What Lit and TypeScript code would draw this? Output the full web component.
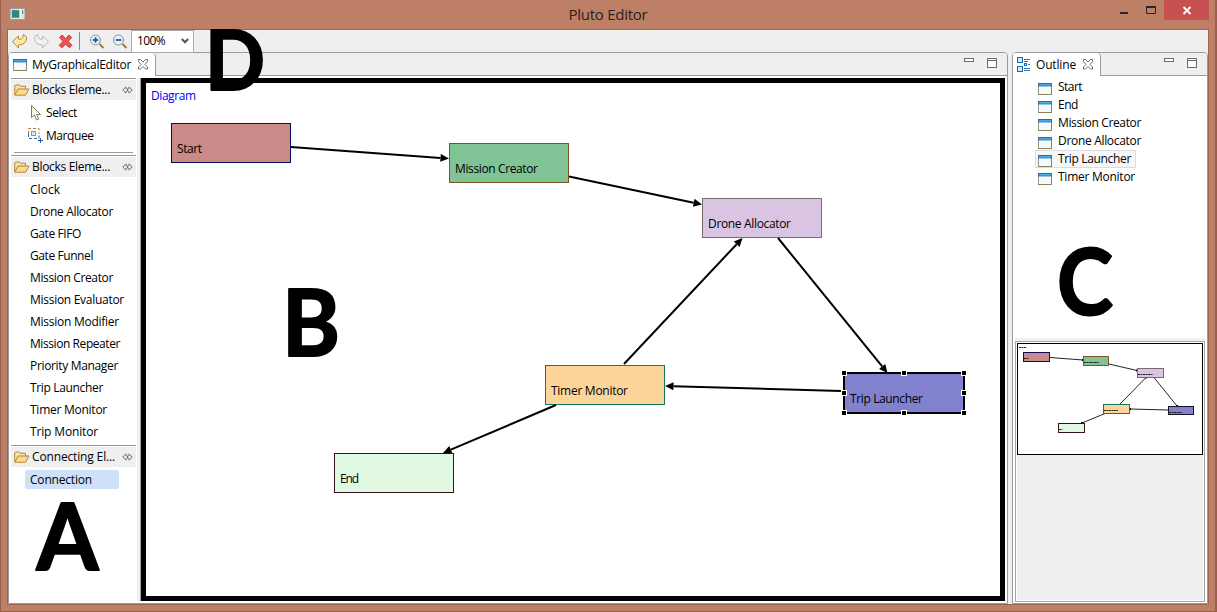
import { LitElement, html, css, svg } from "lit";
import { customElement } from "lit/decorators.js";

const FONT = '"Open Sans", "Noto Sans", sans-serif';
const ctx = document.createElement("canvas").getContext("2d")!;

/** Label tracked so that it takes up the given width. */
const fit = (text: string, width: number, size = 12) => {
  ctx.font = `${size}px ${FONT}`;
  const gap = (width - ctx.measureText(text).width) / text.length;
  return html`<span class="label" style="letter-spacing:${gap.toFixed(3)}px">${text}</span>`;
};

const viewIcon = html`<svg class="icon" width="14" height="12" viewBox="0 0 14 12">
  <rect x=".5" y=".5" width="13" height="11" fill="#f2fafe" stroke="#8d8259" />
  <path d="M.5 11V3" stroke="#8f9a97" />
  <rect width="14" height="3.4" fill="#2b6cab" /><rect x="1" y="1" width="12" height="1.6" fill="#46aee6" />
</svg>`;
const closeIcon = html`<svg class="icon" width="12" height="11" viewBox="0 0 12 11">
  <path d="M1.5.5h2L6 3l2.5-2.5h2v2L8 5.500l2.500 2.500v2h-2L6 7.500 3.500 10h-2V8L4 5.500 1.500 2.500z" fill="#fff" stroke="#6e6e6e" />
</svg>`;
const viewButtons = html`<svg class="viewbtns" width="34" height="12" viewBox="0 0 34 12">
  <rect x=".5" y="1.500" width="9" height="3" fill="#fff" stroke="#6b6b6b" />
  <rect x="23.500" y="1.500" width="9" height="9" fill="#fff" stroke="#6b6b6b" /><path d="M23 3.500h10" stroke="#6b6b6b" />
</svg>`;
const folderIcon = html`<svg class="icon" width="16" height="12" viewBox="0 0 16 12">
  <path d="M.7 10.500V2l1-1h3.600l1 1.200h5.200V5" fill="#fbe3ab" stroke="#b9823c" />
  <path d="M.8 11.200 4 5h11L11.500 11.200z" fill="#fbd98f" stroke="#b9823c" />
</svg>`;
const pinIcon = html`<svg class="icon" width="11" height="8" viewBox="0 0 11 8">
  <path d="M4 .8.8 4 4 7.200M7 .8 10.200 4 7 7.200M6.500 2.200 4.800 4l1.700 1.800M4.500 2.200 6.200 4 4.500 5.800M4 1v1.500M7 1v1.500M4 7V5.500M7 7V5.500" fill="none" stroke="#6a6a6a" />
</svg>`;

const NODES = [
  { t: "Start", w: 25, x: 171, y: 123, f: "#ca8a87", s: "#0c0c5c", m: [1023, 352, 27, 10] },
  { t: "Mission Creator", w: 83, x: 449, y: 143, f: "#80c395", s: "#7d5428", m: [1083, 356, 26, 10] },
  { t: "Drone Allocator", w: 83, x: 702, y: 198, f: "#d9c5e3", s: "#7c6b63", m: [1137, 368, 27, 10] },
  { t: "Timer Monitor", w: 77, x: 545, y: 365, f: "#fdd59b", s: "#137a5c", m: [1103, 404, 27, 10] },
  { t: "Trip Launcher", w: 73, x: 844, y: 373, f: "#8281ce", s: "#111122", m: [1168, 406, 26, 9] },
  { t: "End", w: 19, x: 334, y: 453, f: "#e1f9e3", s: "#351014", m: [1058, 423, 27, 10] },
];
const LINKS = [
  [291, 147, 449, 158.5], [569, 176.500, 702, 204.500], [624, 364, 742.500, 238],
  [778, 238, 887.500, 373], [841, 391, 665, 386], [556, 405, 443, 453],
];
const MINI_LINKS = [
  [1050, 357.500, 1083, 360], [1109, 364, 1137, 370.500], [1120, 404, 1146, 377.500],
  [1154, 377.500, 1177, 406], [1168, 410, 1130, 409], [1105, 413.500, 1082, 423],
];

const arrow = ([x1, y1, x2, y2]: number[]) => {
  const l = Math.hypot(x2 - x1, y2 - y1), u = (x2 - x1) / l, v = (y2 - y1) / l;
  const bx = x2 - u * 8.500, by = y2 - v * 8.500;
  return svg`<path d="M${x1} ${y1}L${bx} ${by}" stroke="#000" stroke-width="2"/>
    <path d="M${x2} ${y2}L${bx - v * 4} ${by + u * 4}L${bx + v * 4} ${by - u * 4}z"/>`;
};

@customElement("app-root")
export class AppRoot extends LitElement {
  static styles = css`
    * { box-sizing: border-box; }
    :host { display: block; position: relative; width: 1217px; height: 612px; overflow: hidden; font: 12px/18px "Open Sans", "Noto Sans", sans-serif; color: #000; }
    svg { display: block; flex: none; }
    .label { white-space: nowrap; flex: none; }
    .window { display: flex; flex-direction: column; height: 612px; background: #bd7f66; border: solid #96604e; border-width: 0 2px 1px 1px; border-right-color: #9c5f4b; padding: 0 6px 6px; }
    .title { display: grid; grid-template-columns: 1fr auto 1fr; height: 29px; }
    .title .app { margin: 8px 0 0 3px; }
    .title .name { font-size: 15px; line-height: 20px; padding-top: 4px; color: #2c201c; }
    .title .controls { display: flex; justify-content: flex-end; }
    .client { flex: 1; display: flex; flex-direction: column; background: #efefef; border: 1px solid #9a6553; min-height: 0; }
    .toolbar { height: 22px; display: flex; align-items: center; }
    .combo { width: 63px; height: 23px; margin-top: 1px; border: 1px solid #acacac; background: #fff; display: flex; align-items: center; padding: 0 4px 2px 5px; justify-content: space-between; z-index: 1; }
    .panes { flex: 1; display: flex; gap: 4px; min-height: 0; }
    .pane { display: flex; flex-direction: column; border: 1px solid #999ba0; border-radius: 4px 4px 0 0; background: #fff; overflow: hidden; }
    .editor { width: 1000px; }
    .outline { width: 196px; }
    .tabs { height: 23px; flex: none; display: flex; justify-content: space-between; background: linear-gradient(#efefef 22px, #999ba0 22px); }
    .tab { display: flex; align-items: center; background: #fff; border-right: 1px solid #999ba0; border-radius: 0 4px 0 0; padding-left: 4px; gap: 5px; }
    .editor .tab { width: 147px; }
    .outline .tab { width: 88px; padding-left: 4px; }
    .tab .icon:last-child { margin-left: 1px; }
    .viewbtns { margin: 4px 9px 0 0; }
    .body { flex: 1; display: flex; min-height: 0; padding: 2px; }
    .palette { width: 125px; }
    .sash { width: 5px; margin-right: 0; background: linear-gradient(90deg, #fff 1px, #efefef 1px, #efefef 4px, #a3a3a3 4px); }
    .canvas { width: 864px; height: 523px; border: 5px solid #000; }
    .head { height: 22px; display: flex; align-items: center; background: linear-gradient(#999 1px, #fff 1px, #fff 2px, #efefef 2px); padding: 2px 3px 0; gap: 2px; }
    .head .icon:last-child { margin-left: auto; }
    .tools { padding: 1px 3px 2px; height: 55px; }
    .tools .rule { height: 1px; background: #999; margin-top: 5px; }
    .tool { display: flex; height: 23px; align-items: center; }
    .tool .icon { width: 32px; }
    .blocks { padding: 2px 0 2px 19px; }
    .block { height: 22px; display: flex; align-items: center; }
    .chosen { height: 19px; width: 94px; margin: 3px 0 0 14px; padding-left: 5px; background: #cde1fb; border-radius: 2px; display: flex; align-items: center; }
    .tree { height: 262px; padding: 2px 0 0 22px; flex: none; }
    .row { display: flex; width: max-content; height: 18px; align-items: center; gap: 6px; padding: 0 4px 0 2px; border: 1px solid transparent; }
    .row .icon { margin-top: 4px; }
    .row.sel { background: #f7f7f7; border-color: #dcdcdc; }
    .hsash { height: 3px; background: #efefef; margin: 0 2px; flex: none; }
    .overview { height: 261px; margin: 0 2px; border: 1px solid #a3a5ad; padding: 1px; background: #efefef; box-shadow: inset 0 0 0 1px #fff; }
    .notes { position: absolute; inset: 0; }
    .notes text { font-family: Lato, sans-serif; font-weight: 700; stroke: #000; stroke-width: 2px; stroke-linejoin: round; }
    .d text { font-size: 12px; }
  `;

  private head(text: string, w: number) {
    return html`<div class="head">${folderIcon}${fit(text, w)}${pinIcon}</div>`;
  }

  private titleBar() {
    return html`<div class="title">
      <svg class="app" width="15" height="12" viewBox="0 0 16 12">
        <rect width="16" height="12" fill="#dfe6e8" stroke="#8d969b" /><rect x="2" y="2" width="8" height="8" fill="#2f8a72" />
        <path d="M2 2h5v4H2z" fill="#3b7d9c" /><path d="M13.500 2v4" stroke="#2e7768" /><path d="M11 1v10" stroke="#fff" />
      </svg>
      <span class="name">${fit("Pluto Editor", 79, 15)}</span>
      <div class="controls"><svg width="94" height="20" viewBox="1115 0 94 20">
        <rect x="1164" width="45" height="20" fill="#c75050" />
        <rect x="1120" y="12" width="8" height="2" fill="#262626" />
        <path d="M1146.500 7v6.500h9V7" fill="none" stroke="#262626" /><rect x="1146" y="6" width="10" height="2" fill="#262626" />
        <path d="m1183.500 7 7 7m0-7-7 7" stroke="#fff" stroke-width="1.800" />
      </svg></div>
    </div>`;
  }

  private toolBar() {
    const zoom = (x: number, plus: boolean) => svg`
      <path d="m${x + 4} 44 4 4" stroke="#a57a3c" stroke-width="2"/>
      <circle cx=${x} cy="40" r="5" fill="#e9f3fc" stroke="#8b9096"/>
      <path d="M${x - 2.800} 40h5.600" stroke="#235a9f" stroke-width="1.800"/>
      ${plus ? svg`<path d="M${x} 37.200v5.600" stroke="#235a9f" stroke-width="1.800"/>` : ""}`;
    return html`<div class="toolbar">
      <svg width="123" height="22" viewBox="8 30 123 22">
        <path d="m12.500 41.500 6-5.500v3.200q4.500 1 5-4.700l3 2.500q.5 7.500-8 8v3z" fill="#fde9a4" stroke="#c08a2c" />
        <path d="m48.500 41.500-6-5.500v3.200q-4.500 1-5-4.700l-3 2.500q-.5 7.500 8 8v3z" fill="#f2f2f2" stroke="#b9b9b9" />
        <path d="m59.500 37.500 2.500-2.500 3.500 3.500 3.500-3.500 2.700 2.500-3.500 3.800 3.800 4-2.500 2.500-4-3.500-3.500 3.500-2.800-2.500 3.800-4z" fill="#ee5350" stroke="#cf3a3a" />
        <path d="M79.500 32v18" stroke="#8a8a8a" />
        ${zoom(95.500, true)}${zoom(118.500, false)}
      </svg>
      <div class="combo">${fit("100%", 28)}<svg width="8" height="6" viewBox="0 0 8 6"><path d="m.8 1 3.200 3.300L7.200 1" fill="none" stroke="#555" stroke-width="2" /></svg></div>
    </div>`;
  }

  private palette() {
    const blocks: [string, number][] = [
      ["Clock", 30], ["Drone Allocator", 83], ["Gate FIFO", 51], ["Gate Funnel", 63], ["Mission Creator", 83],
      ["Mission Evaluator", 94], ["Mission Modifier", 89], ["Mission Repeater", 90], ["Priority Manager", 88],
      ["Trip Launcher", 73], ["Timer Monitor", 77], ["Trip Monitor", 68],
    ];
    return html`<div class="palette">
      ${this.head("Blocks Eleme...", 78)}
      <div class="tools">
        <div class="tool"><svg class="icon" width="32" height="18" viewBox="0 0 32 18">
          <path d="M17.500 1.500v12l3-2.500 2 5 2.200-1-2-4.500h3.800z" fill="#fffde8" stroke="#7a7a66" /></svg>${fit("Select", 31)}</div>
        <div class="tool"><svg class="icon" width="32" height="16" viewBox="0 0 32 16">
          <path d="M14.500 6V.500H25V6" fill="none" stroke="#9a842e" stroke-dasharray="3 2" />
          <path d="M14.500 6v4.500H25V6" fill="none" stroke="#2d6698" stroke-dasharray="3 2" />
          <rect x="17.500" y="3.500" width="4" height="4" fill="#dceaf0" stroke="#8d9a9c" />
          <path d="M24 12.500h5M26.500 10v5" stroke="#235a9f" /></svg>${fit("Marquee", 47.500)}</div>
        <div class="rule"></div>
      </div>
      ${this.head("Blocks Eleme...", 78)}
      <div class="blocks">${blocks.map(([t, w]) => html`<div class="block">${fit(t, w)}</div>`)}</div>
      ${this.head("Connecting El...", 83)}
      <div class="chosen">${fit("Connection", 62)}</div>
    </div>`;
  }

  private diagram() {
    const handles = [844, 904, 964].flatMap((x) => [373, 393, 413].map((y) => [x, y])).filter(([x, y]) => x !== 904 || y !== 393);
    return html`<svg class="d" width="854" height="513" viewBox="146 83 854 513">
      <text x="151" y="100" textLength="45" fill="#0000ff">Diagram</text>
      ${NODES.map((n) => svg`<rect x=${n.x + 0.5} y=${n.y + 0.5} width="119" height="39" fill=${n.f} stroke=${n.s}/>
        <text x=${n.x + 6} y=${n.y + 30} textLength=${n.w}>${n.t}</text>`)}
      ${LINKS.map(arrow)}
      <rect x="844" y="373" width="120" height="40" fill="none" stroke="#000" stroke-width="2" />
      ${handles.map(([x, y]) => svg`<rect x=${x - 2.5} y=${y - 2.5} width="5" height="5" stroke="#fff"/>`)}
    </svg>`;
  }

  private overview() {
    return html`<svg width="186" height="112" viewBox="1017 343 186 112">
      <rect x="1017.500" y="343.500" width="185" height="111" fill="#fff" stroke="#000" />
      <path d="M1019 347.500h7" stroke="#00f" stroke-dasharray="2 .5" />
      ${MINI_LINKS.map(([a, b, c, d]) => svg`<path d="M${a} ${b}L${c} ${d}" stroke="#222"/><rect x=${c - 1} y=${d - 1} width="2" height="2"/>`)}
      ${NODES.map(({ m, w, f, s }) => svg`<rect x=${m[0] + 0.5} y=${m[1] + 0.5} width=${m[2] - 1} height=${m[3] - 1} fill=${f} stroke=${s}/>
        <path d="M${m[0] + 1} ${m[1] + 6.5}h${w / 5.5}" stroke="#222" stroke-dasharray="2 .5"/>`)}
    </svg>`;
  }

  render() {
    const rows: [string, number][] = [["Start", 24], ["End", 20], ["Mission Creator", 83], ["Drone Allocator", 83], ["Trip Launcher", 73], ["Timer Monitor", 77]];
    return html`<div class="window">
        ${this.titleBar()}
        <div class="client">
          ${this.toolBar()}
          <div class="panes">
            <div class="pane editor">
              <div class="tabs"><div class="tab">${viewIcon}${fit("MyGraphicalEditor", 99)}${closeIcon}</div>${viewButtons}</div>
              <div class="body">${this.palette()}<div class="sash"></div><div class="canvas">${this.diagram()}</div></div>
            </div>
            <div class="pane outline">
              <div class="tabs">
                <div class="tab"><svg class="icon" width="14" height="16" viewBox="0 0 14 16">
                  <g fill="#cfe9fb" stroke="#1a68a8"><rect x=".5" y=".5" width="5" height="5" /><rect x=".5" y="9.500" width="5" height="5" /><rect x="7.500" y="6.500" width="2" height="2" /></g>
                  <path d="M7 2.500h6M7 4.500h4M11 7.500h2M7 11.500h6M7 13.500h6" stroke="#2a77b5" />
                </svg>${fit("Outline", 40)}${closeIcon}</div>${viewButtons}
              </div>
              <div class="tree">${rows.map(([t, w]) => html`<div class="row ${t === "Trip Launcher" ? "sel" : ""}">${viewIcon}${fit(t, w)}</div>`)}</div>
              <div class="hsash"></div>
              <div class="overview">${this.overview()}</div>
            </div>
          </div>
        </div>
      </div>
      <svg class="notes" width="1217" height="612" viewBox="0 0 1217 612">
        <text x="36.500" y="570" font-size="92" textLength="62" lengthAdjust="spacingAndGlyphs">A</text>
        <text x="282" y="356" font-size="92" textLength="58" lengthAdjust="spacingAndGlyphs">B</text>
        <text x="1057" y="315" font-size="92" textLength="56" lengthAdjust="spacingAndGlyphs">C</text>
        <text x="205" y="90" font-size="83" textLength="60" lengthAdjust="spacingAndGlyphs">D</text>
      </svg>`;
  }
}
